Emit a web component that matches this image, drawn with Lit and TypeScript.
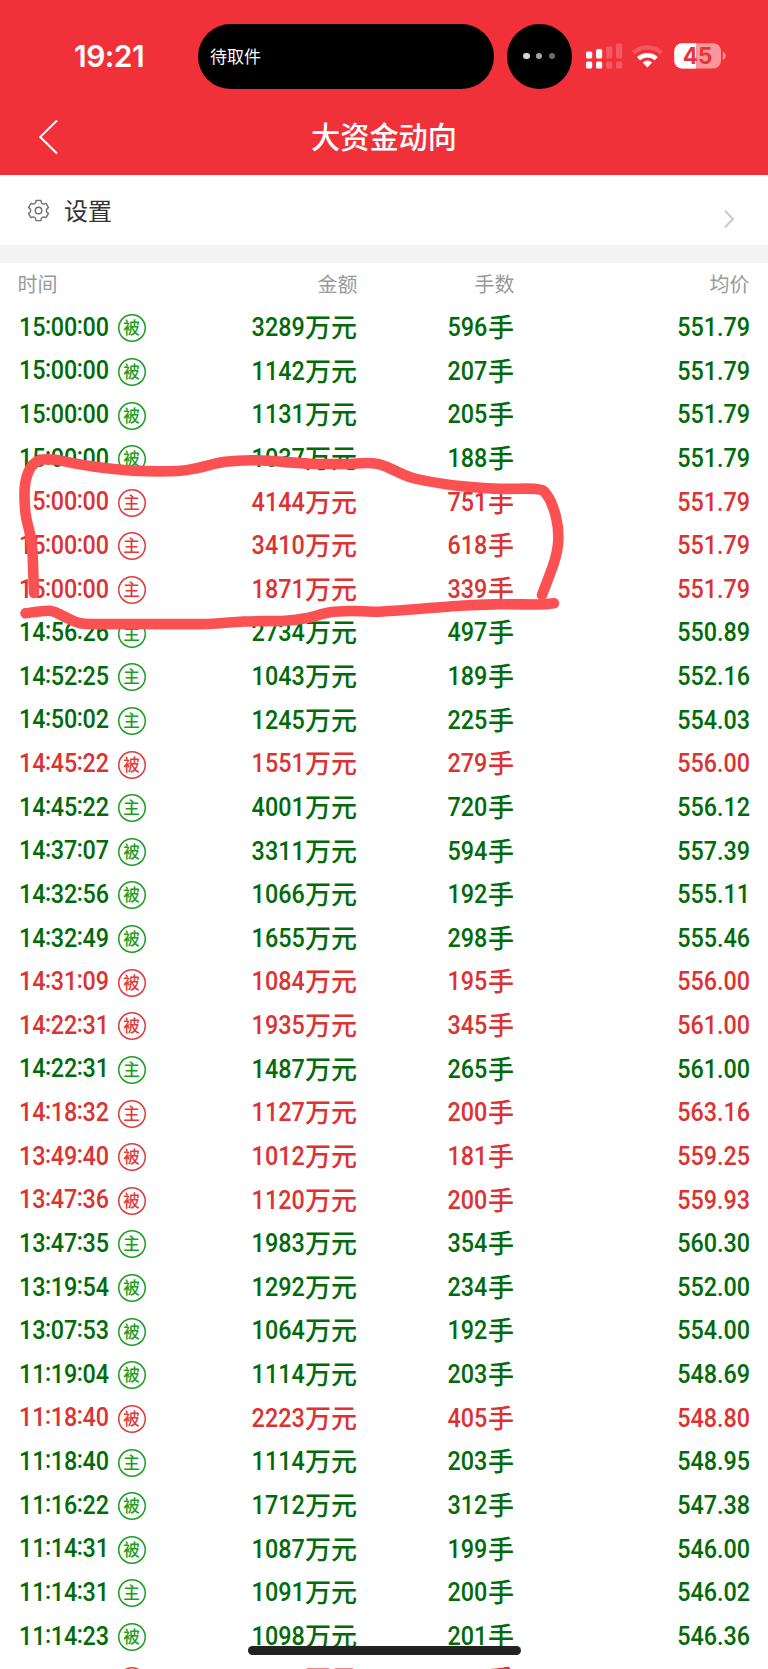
import { LitElement, html, css, svg } from 'lit';
import { customElement, property } from 'lit/decorators.js';

type Side = '主' | '被';
type Row = [time: string, side: Side, up: boolean, amount: string, lots: string, price: string];

const rows: Row[] = [
  ['15:00:00', '被', false, '3289', '596', '551.79'],
  ['15:00:00', '被', false, '1142', '207', '551.79'],
  ['15:00:00', '被', false, '1131', '205', '551.79'],
  ['15:00:00', '被', false, '1037', '188', '551.79'],
  ['15:00:00', '主', true, '4144', '751', '551.79'],
  ['15:00:00', '主', true, '3410', '618', '551.79'],
  ['15:00:00', '主', true, '1871', '339', '551.79'],
  ['14:56:26', '主', false, '2734', '497', '550.89'],
  ['14:52:25', '主', false, '1043', '189', '552.16'],
  ['14:50:02', '主', false, '1245', '225', '554.03'],
  ['14:45:22', '被', true, '1551', '279', '556.00'],
  ['14:45:22', '主', false, '4001', '720', '556.12'],
  ['14:37:07', '被', false, '3311', '594', '557.39'],
  ['14:32:56', '被', false, '1066', '192', '555.11'],
  ['14:32:49', '被', false, '1655', '298', '555.46'],
  ['14:31:09', '被', true, '1084', '195', '556.00'],
  ['14:22:31', '被', true, '1935', '345', '561.00'],
  ['14:22:31', '主', false, '1487', '265', '561.00'],
  ['14:18:32', '主', true, '1127', '200', '563.16'],
  ['13:49:40', '被', true, '1012', '181', '559.25'],
  ['13:47:36', '被', true, '1120', '200', '559.93'],
  ['13:47:35', '主', false, '1983', '354', '560.30'],
  ['13:19:54', '被', false, '1292', '234', '552.00'],
  ['13:07:53', '被', false, '1064', '192', '554.00'],
  ['11:19:04', '被', false, '1114', '203', '548.69'],
  ['11:18:40', '被', true, '2223', '405', '548.80'],
  ['11:18:40', '主', false, '1114', '203', '548.95'],
  ['11:16:22', '被', false, '1712', '312', '547.38'],
  ['11:14:31', '被', false, '1087', '199', '546.00'],
  ['11:14:31', '主', false, '1091', '200', '546.02'],
  ['11:14:23', '被', false, '1098', '201', '546.36'],
  ['', '主', true, '', '', ''],
];

type Point = [number, number];

/** Smooth curve through the given points (Catmull-Rom converted to Bézier). */
function smooth(p: Point[]): string {
  let d = `M${p[0][0]} ${p[0][1]}`;
  for (let i = 0; i < p.length - 1; i++) {
    const a = p[i - 1] ?? p[i];
    const b = p[i];
    const c = p[i + 1];
    const e = p[i + 2] ?? c;
    d += `C${b[0] + (c[0] - a[0]) / 6} ${b[1] + (c[1] - a[1]) / 6} ${c[0] - (e[0] - b[0]) / 6} ${c[1] - (e[1] - b[1]) / 6} ${c[0]} ${c[1]}`;
  }
  return d;
}

const upperStroke: Point[] = [
  [34, 593], [33, 565], [32.3, 550], [30, 534], [25.5, 513], [25, 485], [31, 467], [41, 459.8],
  [55, 459.8], [90, 466], [133, 470.6], [178, 471], [200, 467.5], [225, 461.8], [257, 460.3],
  [310, 463.7], [345, 464], [378, 464], [413, 478], [460, 486], [500, 488.8], [536, 489], [547, 495],
  [556, 517], [558.3, 540], [554.5, 561], [542, 595],
];
const lowerStroke: Point[] = [
  [25.5, 613.3], [50, 610.8], [63, 616], [78, 622.5], [92, 624], [140, 624], [207, 624], [243, 621.5],
  [285, 620.7], [307, 618], [330, 612.3], [353, 611], [383, 611.5], [460, 605.7], [497, 604.3],
  [540, 604.5], [554, 603.3],
];

@customElement('status-bar')
export class StatusBar extends LitElement {
  static styles = css`
    :host { display: flex; height: 88.5px; padding: 24px 0 0 74px; box-sizing: border-box; align-items: center; color: #fff; }
    .clock { width: 124px; font: 600 30px/67px Inter, sans-serif; letter-spacing: -0.55px; }
    .island { width: 295.5px; height: 64.5px; border-radius: 33px; background: #000; box-sizing: border-box; padding-left: 12px; font-size: 17px; line-height: 64px; }
    .more { width: 64.5px; height: 64.5px; margin-left: 13.5px; border-radius: 50%; background: #000; display: flex; align-items: center; justify-content: center; gap: 6.4px; }
    .dot { width: 6.4px; height: 6.4px; border-radius: 50%; background: #d8d8d8; }
    .dot.mid { background: #a5a5a5; }
    .dot.dim { background: #6a6a6a; }
    .icons { display: block; margin-left: 13.5px; }
  `;
  render() {
    return html`
      <div class="clock">19:21</div>
      <div class="island">待取件</div>
      <div class="more"><i class="dot"></i><i class="dot mid"></i><i class="dot dim"></i></div>
      <svg class="icons" width="142" height="32" viewBox="584 40.5 142 32">
        <g fill="#fff">
          <rect x="585" y="52" width="6.2" height="7" rx="1.5" />
          <rect x="595" y="49.5" width="6.2" height="9.5" rx="1.5" />
          <rect x="585" y="62" width="6.2" height="7" rx="1.5" />
          <rect x="595" y="62" width="6.2" height="7" rx="1.5" />
          <g opacity=".2">
            <rect x="605" y="47" width="6.2" height="12" rx="1.5" />
            <rect x="615" y="44" width="6.2" height="15" rx="1.5" />
            <rect x="605" y="62" width="6.2" height="7" rx="1.5" />
            <rect x="615" y="62" width="6.2" height="7" rx="1.5" />
          </g>
          <path d="M646.4 68l-4.8-5a7 7 0 0 1 9.6 0z" />
        </g>
        <path d="M637.5 59.2a13 13 0 0 1 17.8 0" fill="none" stroke="#fff" stroke-width="4.4" />
        <path d="M632.3 53.4a20.7 20.7 0 0 1 28.2 0" fill="none" stroke="#fff" stroke-opacity=".2" stroke-width="4.2" />
        <rect x="673.3" y="43.7" width="46.7" height="25.3" rx="8" fill="#fff" fill-opacity=".5" />
        <path d="M695 43.7h-13.7a8 8 0 0 0-8 8v9.3a8 8 0 0 0 8 8H695z" fill="#fff" />
        <path d="M721.8 52.3c3.6 1.2 3.6 7 0 8.2z" fill="#fff" fill-opacity=".5" />
        <text x="696.6" y="64.3" text-anchor="middle" font-family="Inter, sans-serif" font-weight="700" font-size="22.5" fill="#e9343a">45</text>
      </svg>`;
  }
}

@customElement('trade-row')
export class TradeRow extends LitElement {
  @property({ attribute: false }) row!: Row;
  static styles = css`
    :host { display: grid; grid-template-columns: 140px 200px 157px 235px; height: 43.63px; margin-left: 17px; align-items: center; font-size: 26px; font-weight: 500; line-height: 43px; color: #006b08; white-space: nowrap; }
    :host(.up) { color: #dc3232; }
    .time { display: flex; align-items: center; height: 43px; padding-left: 1.5px; }
    .cell { display: flex; justify-content: flex-end; height: 43px; margin-top: -2.6px; }
    .num { display: block; font-family: Roboto, sans-serif; font-size: 25.4px; line-height: 43px; letter-spacing: 0; transform: scaleX(0.92); transform-origin: right; margin-top: 2px; }
    .clock { width: 99px; transform-origin: left; letter-spacing: -0.1px; margin-top: 1px; }
    .colon { display: inline-block; width: 5.9px; text-indent: -0.5px; transform: translateY(-2px); }
    .price { letter-spacing: -0.05px; margin-right: -0.8px; }
    .unit { font-size: 26px; margin-left: 0.3px; }
    .badge { width: 28px; height: 28px; box-shadow: inset 0 0 0 1.5px #1a9f22; border-radius: 50%; color: #1a9f22; font-size: 16.6px; font-weight: 500; line-height: 27px; text-align: center; margin-top: 3px; }
    :host(.up) .badge { color: #e03a3a; box-shadow: inset 0 0 0 1.5px #e03a3a; }
  `;
  render() {
    const [time, side, , amount, lots, price] = this.row;
    return html`
      <div class="time">
        <span class="num clock">${time.split(':').map((t, i) => html`${i ? html`<span class="colon">:</span>` : ''}${t}`)}</span>
        <span class="badge">${side}</span>
      </div>
      <div class="cell"><span class="num">${amount}</span><span class="unit">万元</span></div>
      <div class="cell"><span class="num">${lots}</span><span class="unit">手</span></div>
      <div class="cell"><span class="num price">${price}</span></div>`;
  }
}

@customElement('app-root')
export class AppRoot extends LitElement {
  static styles = css`
    :host { display: block; position: relative; width: 768px; height: 1669px; overflow: hidden; background: #fff; font-family: "Noto Sans CJK SC", sans-serif; }
    .top { height: 175px; background: #f13139; color: #fff; }
    .nav { display: grid; grid-template-columns: 60px 1fr 60px; height: 86.5px; padding-top: 12px; box-sizing: border-box; }
    .title { text-align: center; font-size: 29.2px; font-weight: 500; line-height: 72px; height: 72px; margin-top: -1.5px; }
    .back { display: block; margin: 18px 0 0 38px; }
    .settings { display: flex; height: 70px; padding: 0 33px 0 26px; border-bottom: 18px solid #f4f4f4; }
    .gear { margin-top: 22.5px; }
    .label { margin-left: 13px; flex: 1; font-size: 24px; line-height: 70px; color: #333; }
    .go { margin-top: 34px; }
    .head { display: grid; grid-template-columns: 140px 200px 157px 235px; margin-left: 17.5px; height: 42px; font-size: 20px; line-height: 42px; color: #999; text-align: right; }
    .first { text-align: left; }
    .list { height: 1364px; overflow: hidden; }
    .marks { position: absolute; left: 0; top: 0; pointer-events: none; }
    .home { position: absolute; left: 247.5px; top: 1645.5px; width: 273.5px; height: 9px; border-radius: 5px; background: #222; }
  `;
  render() {
    const gear = Array.from({ length: 6 }, (_, k): string => {
      const at = (r: number, deg: number) => {
        const a = ((k * 60 + deg - 90) * Math.PI) / 180;
        return `${(12.5 + r * Math.cos(a)).toFixed(2)} ${(12.5 + r * Math.sin(a)).toFixed(2)}`;
      };
      return `${k ? 'L' : 'M'}${at(8.3, -20)}L${at(10.3, -14)}Q${at(10.2, 0)} ${at(10.3, 14)}L${at(8.3, 20)}Q${at(7.4, 30)} ${at(8.3, 40)}`;
    }).join('') + 'Z';
    return html`
      <header class="top">
        <status-bar></status-bar>
        <nav class="nav">
          <svg class="back" width="22" height="36" viewBox="0 0 22 36" fill="none" stroke="#fff" stroke-width="2"><path d="M19 1.5L2.2 18 19 34.5" /></svg>
          <div class="title">大资金动向</div>
        </nav>
      </header>
      <section class="settings">
        <svg class="gear" width="25" height="25" viewBox="0 0 25 25" fill="none" stroke="#707070" stroke-width="1.4" stroke-linejoin="round"><path d=${gear} /><circle cx="12.5" cy="12.5" r="3.3" /></svg>
        <span class="label">设置</span>
        <svg class="go" width="12" height="20" viewBox="0 0 12 20" fill="none" stroke="#cacaca" stroke-width="2"><path d="M2 1.8L10 10 2 18.2" /></svg>
      </section>
      <div class="head"><span class="first">时间</span><span>金额</span><span>手数</span><span>均价</span></div>
      <main class="list">${rows.map((r) => html`<trade-row class=${r[2] ? 'up' : ''} .row=${r}></trade-row>`)}</main>
      <svg class="marks" width="768" height="1669" viewBox="0 0 768 1669" fill="none" stroke="#fc5153" stroke-width="10.6" stroke-linecap="round" stroke-linejoin="round">
        ${[upperStroke, lowerStroke].map((s) => svg`<path d=${smooth(s)} />`)}
      </svg>
      <div class="home"></div>`;
  }
}
